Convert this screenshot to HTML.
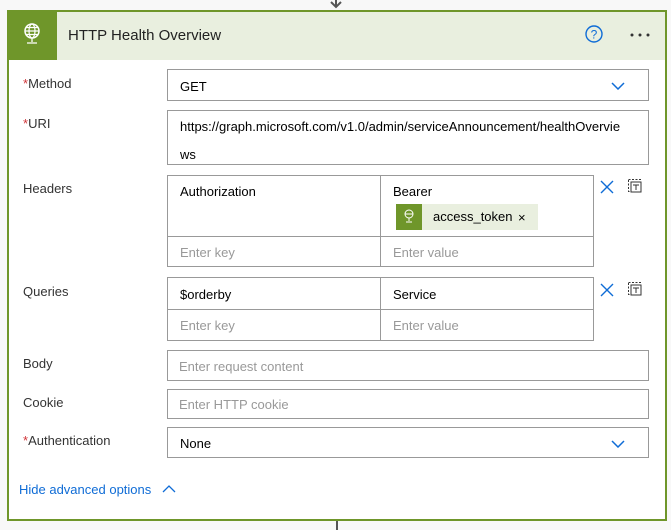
<!DOCTYPE html>
<html><head><style>
*{box-sizing:border-box}
body{margin:0;width:671px;height:530px;background:#f8f8f8;font-family:"Segoe UI","Liberation Sans",sans-serif;font-size:13px;color:#000;position:relative;overflow:hidden}
.a{position:absolute}
.card{left:7px;top:10px;width:660px;height:511px;background:#fff}
.frame{left:0;top:0;width:660px;height:511px;border:2px solid #6f962a}
.hdr{left:0;top:0;width:660px;height:50px;background:#e9efdf}
.ico{left:0;top:0;width:50px;height:50px;background:#6f962a}
.lbl{left:16px;font-size:13px;color:#333}
.req{color:#d13438}
.box{border:1px solid #999;background:#fff}
.box>span{margin-top:2px}
.ph{color:#999}
.chev{width:14px;height:8px}
</style></head><body>
<svg class="a" style="left:328px;top:0" width="16" height="9"><path d="M8 0v7M3 2l5 5 5-5" stroke="#555" stroke-width="2" fill="none"/></svg>
<div class="a" style="left:336px;top:519px;width:2px;height:11px;background:#555"></div>
<div class="a card">
 <div class="a hdr"></div>
 <div class="a ico"><svg class="a" style="left:15px;top:12px" width="20" height="26" viewBox="0 0 20 26"><circle cx="10" cy="9" r="7" fill="none" stroke="#fff" stroke-width="1.5"/><ellipse cx="10" cy="9" rx="3" ry="7" fill="none" stroke="#fff" stroke-width="1.2"/><path d="M3 9h14M4 5.5h12M4 12.5h12M10 16v4M5 21h10" stroke="#fff" stroke-width="1.3" fill="none"/></svg></div>
 <div class="a" style="left:61px;top:17px;font-size:15px;color:#222">HTTP Health Overview</div>
 <svg class="a" style="left:577px;top:14px" width="20" height="20"><circle cx="10" cy="10" r="8" fill="none" stroke="#0f6cd6" stroke-width="1.4"/><text x="10" y="14.5" font-size="12" text-anchor="middle" fill="#0f6cd6" font-family="Liberation Sans">?</text></svg>
 <svg class="a" style="left:622px;top:22px" width="24" height="6"><circle cx="3" cy="3" r="1.5" fill="#333"/><circle cx="11" cy="3" r="1.5" fill="#333"/><circle cx="19" cy="3" r="1.5" fill="#333"/></svg>

 <div class="a lbl" style="top:66px"><span class="req">*</span>Method</div>
 <div class="a box" style="left:160px;top:59px;width:482px;height:32px"><span class="a" style="left:12px;top:7px">GET</span><svg class="a chev" style="left:443px;top:12px"><path d="M1 1l6 6 6-6" stroke="#0f6cd6" stroke-width="1.5" fill="none"/></svg></div>

 <div class="a lbl" style="top:106px"><span class="req">*</span>URI</div>
 <div class="a box" style="left:160px;top:100px;width:482px;height:55px"><div class="a" style="left:12px;top:2px;width:447px;line-height:28px;word-break:break-all">https://graph.microsoft.com/v1.0/admin/serviceAnnouncement/healthOverviews</div></div>

 <div class="a lbl" style="top:171px">Headers</div>
 <div class="a box" style="left:160px;top:165px;width:214px;height:62px"><span class="a" style="left:12px;top:6px">Authorization</span></div>
 <div class="a box" style="left:373px;top:165px;width:214px;height:62px"><span class="a" style="left:12px;top:6px">Bearer</span>
  <div class="a" style="left:15px;top:28px;width:142px;height:26px;background:#e9efdf"><div class="a" style="left:0;top:0;width:26px;height:26px;background:#6f962a"><svg class="a" style="left:7px;top:5px" width="12" height="16"><circle cx="6" cy="5" r="4" fill="none" stroke="#fff" stroke-width="1"/><path d="M2 5h8M6 9v3M3 13h6" stroke="#fff" fill="none"/></svg></div><span class="a" style="left:37px;top:5px">access_token</span><span class="a" style="left:122px;top:6px">×</span></div>
 </div>
 <div class="a box" style="left:160px;top:226px;width:214px;height:31px"><span class="a ph" style="left:12px;top:6px">Enter key</span></div>
 <div class="a box" style="left:373px;top:226px;width:214px;height:31px"><span class="a ph" style="left:12px;top:6px">Enter value</span></div>
 <svg class="a" style="left:593px;top:170px" width="14" height="14"><path d="M1 1l12 12M13 1L1 13" stroke="#0f6cd6" stroke-width="1.4"/></svg>
 <svg class="a" style="left:620px;top:168px" width="16" height="16"><rect x="1.5" y="1.5" width="12" height="12" fill="none" stroke="#333" stroke-dasharray="2 1.5"/><rect x="4" y="4" width="10" height="10" fill="#fff" stroke="#333"/><path d="M6 7h6M9 7v5" stroke="#333"/></svg>

 <div class="a lbl" style="top:274px">Queries</div>
 <div class="a box" style="left:160px;top:267px;width:214px;height:33px"><span class="a" style="left:12px;top:7px">$orderby</span></div>
 <div class="a box" style="left:373px;top:267px;width:214px;height:33px"><span class="a" style="left:12px;top:7px">Service</span></div>
 <div class="a box" style="left:160px;top:299px;width:214px;height:32px"><span class="a ph" style="left:12px;top:6px">Enter key</span></div>
 <div class="a box" style="left:373px;top:299px;width:214px;height:32px"><span class="a ph" style="left:12px;top:6px">Enter value</span></div>
 <svg class="a" style="left:593px;top:273px" width="14" height="14"><path d="M1 1l12 12M13 1L1 13" stroke="#0f6cd6" stroke-width="1.4"/></svg>
 <svg class="a" style="left:620px;top:271px" width="16" height="16"><rect x="1.5" y="1.5" width="12" height="12" fill="none" stroke="#333" stroke-dasharray="2 1.5"/><rect x="4" y="4" width="10" height="10" fill="#fff" stroke="#333"/><path d="M6 7h6M9 7v5" stroke="#333"/></svg>

 <div class="a lbl" style="top:346px">Body</div>
 <div class="a box" style="left:160px;top:340px;width:482px;height:31px"><span class="a ph" style="left:11px;top:6px">Enter request content</span></div>
 <div class="a lbl" style="top:385px">Cookie</div>
 <div class="a box" style="left:160px;top:379px;width:482px;height:30px"><span class="a ph" style="left:11px;top:5px">Enter HTTP cookie</span></div>
 <div class="a lbl" style="top:423px"><span class="req">*</span>Authentication</div>
 <div class="a box" style="left:160px;top:417px;width:482px;height:31px"><span class="a" style="left:12px;top:6px">None</span><svg class="a chev" style="left:443px;top:12px"><path d="M1 1l6 6 6-6" stroke="#0f6cd6" stroke-width="1.5" fill="none"/></svg></div>

 <div class="a" style="left:12px;top:472px;color:#0f6cd6">Hide advanced options</div>
 <svg class="a" style="left:155px;top:475px" width="14" height="9"><path d="M1 7l6-6 6 6" stroke="#0f6cd6" stroke-width="1.3" fill="none"/></svg>
 <div class="a frame"></div>
</div>
</body></html>
